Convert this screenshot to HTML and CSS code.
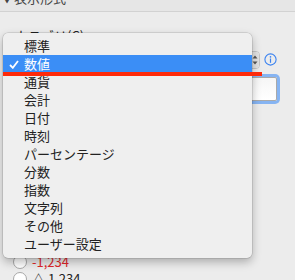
FILE: index.html
```html
<!DOCTYPE html>
<html lang="ja">

<head>
  <meta charset="UTF-8" />
  <title>表示形式</title>
  <link rel="stylesheet" href="styles.css">
</head>

<body>
  <div class="header">
    <div class="title"><span class="tri">▼</span> 表示形式</div>
  </div>
  <div class="panel">
    <div class="label">カテゴリ(C)</div>
    <div class="row">
      <div class="popup">
        <span class="stepper">
          <svg width="6" height="12" viewBox="0 0 6 12">
            <path d="M0.5 4.5 L3 1.5 L5.5 4.5 Z M0.5 7.5 L3 10.5 L5.5 7.5 Z" fill="#555" />
          </svg>
        </span>
      </div>
      <svg class="info" width="13" height="13" viewBox="0 0 13 13">
        <circle cx="6.5" cy="6.5" r="5.6" fill="none" stroke="#3a82f0" stroke-width="1.1" />
        <circle cx="6.5" cy="3.9" r="0.8" fill="#3a82f0" />
        <rect x="5.9" y="5.5" width="1.2" height="4.3" fill="#3a82f0" />
      </svg>
    </div>
    <div class="field-row">
      <div class="field"></div>
    </div>
    <div class="radios">
      <div class="radio"><span class="dot"></span><span class="neg">-1,234</span></div>
      <div class="radio"><span class="dot"></span><span>△ 1,234</span></div>
    </div>
  </div>

  <!-- 開いているメニュー -->
  <div class="menu">
    <div class="item">標準</div>
    <div class="item selected">
      <svg class="check" width="10" height="9" viewBox="0 0 10 9">
        <path d="M1 5 L3.8 7.8 L9 1" fill="none" stroke="#fff" stroke-width="1.8" />
      </svg>数値
    </div>
    <div class="item">通貨</div>
    <div class="item">会計</div>
    <div class="item">日付</div>
    <div class="item">時刻</div>
    <div class="item">パーセンテージ</div>
    <div class="item">分数</div>
    <div class="item">指数</div>
    <div class="item">文字列</div>
    <div class="item">その他</div>
    <div class="item">ユーザー設定</div>
  </div>
  <div class="mark"></div>
</body>

</html>
```
FILE: styles.css
```css
body {
  margin: 0;
  padding: 0;
  width: 295px;
  height: 280px;
  overflow: hidden;
  background-color: #ececec;
  font-family: "Noto Sans CJK JP", "Noto Sans", sans-serif;
  font-size: 13px;
  color: #222;
}

.header {
  height: 11px;
  background-color: #e6e6e6;
  border-bottom: 1px solid #d2d2d2;
  overflow: hidden;
  color: #444;
}

.header .title {
  margin-top: -11px;
  padding-left: 3px;
  line-height: 18px;
}

.header .tri {
  font-size: 8px;
}

.panel {
  padding: 16px 0 0 15px;
}

.label {
  height: 22px;
  line-height: 16px;
}

.row {
  display: flex;
  align-items: center;
  height: 19px;
}

.popup {
  width: 244px;
  height: 18px;
  margin-left: 1px;
  box-sizing: border-box;
  border: 1px solid #c4c4c4;
  border-radius: 4px;
  background-color: #fbfbfb;
  display: flex;
  justify-content: flex-end;
}

.stepper {
  width: 9px;
  display: flex;
  align-items: center;
  justify-content: center;
  background-color: #e2e2e2;
  border-radius: 0 3px 3px 0;
}

.info {
  margin-left: 4px;
}

.field-row {
  margin-top: 8px;
  padding-left: 105px;
}

.field {
  width: 157px;
  height: 24px;
  box-sizing: border-box;
  border: 1px solid #a9a9a9;
  background: linear-gradient(#f6f6f6, #ffffff);
  box-shadow: 0 0 0 3px #86b4f2;
  border-radius: 2px;
}

.radios {
  margin-top: 152px;
}

.radio {
  display: flex;
  align-items: center;
  height: 17px;
  gap: 5px;
}

.dot {
  width: 14px;
  height: 14px;
  margin-left: -2px;
  box-sizing: border-box;
  border: 1px solid #a8a8a8;
  border-radius: 50%;
  background-color: #fff;
}

.neg {
  color: #e0262a;
}

.menu {
  position: absolute;
  left: 3px;
  top: 33px;
  width: 249px;
  padding: 4px 0 5px;
  background-color: #efefef;
  border-radius: 5px;
  box-shadow: 0 0 0 0.5px rgba(0, 0, 0, 0.18), 0 4px 10px rgba(0, 0, 0, 0.28);
}

.item {
  height: 18px;
  line-height: 18px;
  padding-left: 21px;
  position: relative;
}

.item.selected {
  background-color: #3b8ef6;
  color: #fff;
}

.check {
  position: absolute;
  left: 6px;
  top: 5px;
}

.mark {
  position: absolute;
  left: 3px;
  top: 72px;
  width: 259px;
  height: 4px;
  background-color: #fe2a0a;
}
```
